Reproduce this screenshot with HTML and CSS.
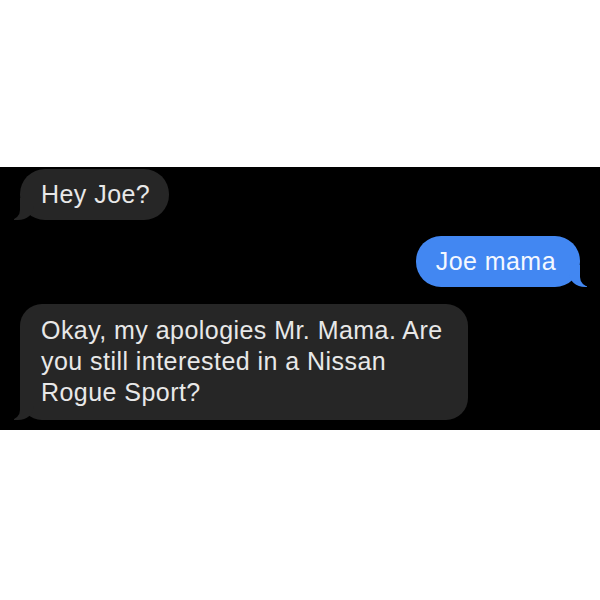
FILE: index.html
```
<!DOCTYPE html>
<html lang="en">
  <head>
    <meta charset="UTF-8" />
    <meta name="viewport" content="width=device-width, initial-scale=1.0" />
    <title>Messages</title>
    <link rel="stylesheet" href="styles.css">
  </head>
  <body>
    <div class="page">
      <div class="thread">
        <div class="bubble them">Hey Joe?</div>
        <div class="bubble me">Joe mama</div>
        <div class="bubble them last">Okay, my apologies Mr. Mama. Are<br>you still interested in a Nissan<br>Rogue Sport?</div>
      </div>
    </div>
  </body>
</html>
```

FILE: styles.css
```
body {
  margin: 0;
  background-color: #ffffff;
  font-family: "Liberation Sans", Arial, sans-serif;
}
.page {
  padding-top: 167px;
}
.thread {
  display: flex;
  flex-direction: column;
  align-items: flex-start;
  background-color: #000000;
  padding: 2px 20px 10px 20px;
}
.bubble {
  position: relative;
  padding: 10px 19px 10px 21px;
  border-radius: 25px;
  font-size: 25px;
  letter-spacing: 0.45px;
  line-height: 31px;
  color: #e8e8e8;
  white-space: nowrap;
}
.bubble::before,
.bubble::after {
  content: "";
  position: absolute;
  bottom: 0;
  height: 22px;
}
.them {
  background-color: #262626;
}
.them::before {
  left: -6px;
  width: 20px;
  background-color: #262626;
  border-bottom-right-radius: 16px 14px;
}
.them::after {
  left: -26px;
  width: 26px;
  background-color: #000000;
  border-bottom-right-radius: 10px;
}
.me {
  align-self: flex-end;
  margin: 16px 0 17px;
  padding: 10px 24px 10px 20px;
  background-color: #4287f2;
  color: #f4f8ff;
}
.me::before {
  right: -7px;
  width: 18px;
  background-color: #4287f2;
  border-bottom-left-radius: 16px 14px;
}
.me::after {
  right: -26px;
  width: 26px;
  background-color: #000000;
  border-bottom-left-radius: 10px;
}
.last {
  padding: 11px 25px 12px 21px;
  border-radius: 22px;
}
```
